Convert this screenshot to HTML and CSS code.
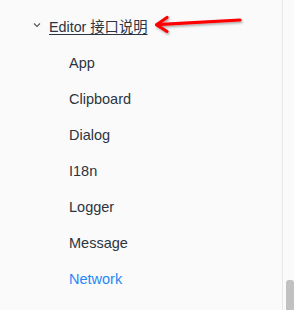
FILE: index.html
```html
<!DOCTYPE html>
<html>
<head>
<meta charset="utf-8">
<link rel="stylesheet" href="styles.css">
</head>
<body>
<div class="page">
  <nav class="sidebar">
    <div class="group">
      <div class="group-title">
        <svg class="chevron" width="8" height="6" viewBox="0 0 8 6"><path d="M1 1.5 L4 4.5 L7 1.5" fill="none" stroke="#555" stroke-width="1.1"/></svg>
        <a class="group-link">Editor 接口说明</a>
        <svg class="arrow" width="100" height="30" viewBox="0 0 100 30">
          <defs>
            <filter id="sh" x="-10%" y="-30%" width="120%" height="160%">
              <feDropShadow dx="1" dy="1.5" stdDeviation="1.2" flood-color="#000" flood-opacity="0.35"/>
            </filter>
          </defs>
          <g filter="url(#sh)" fill="none" stroke="#f00" stroke-width="3.2" stroke-linecap="round" stroke-linejoin="round">
            <path d="M90 12 L7 16.7"/>
            <path d="M17 9.5 L6.5 16.7 L17 23.5"/>
          </g>
        </svg>
      </div>
      <ul class="items">
        <li class="item">App</li>
        <li class="item">Clipboard</li>
        <li class="item">Dialog</li>
        <li class="item">I18n</li>
        <li class="item">Logger</li>
        <li class="item">Message</li>
        <li class="item active">Network</li>
      </ul>
    </div>
  </nav>
  <div class="scroll-track"><div class="scroll-thumb"></div></div>
</div>
</body>
</html>
```
FILE: styles.css
```css
html, body {
  margin: 0;
  padding: 0;
  background: #fafafa;
}
.page {
  display: flex;
  width: 294px;
  height: 310px;
  overflow: hidden;
  font-family: "Liberation Sans", Arial, "Noto Sans CJK SC", sans-serif;
  font-size: 14.5px;
  color: #2c3440;
}
.sidebar {
  width: 283px;
  border-right: 1px solid #e8e8e8;
  box-sizing: border-box;
  padding-top: 7px;
}
.group-title {
  position: relative;
  display: flex;
  align-items: center;
  height: 36px;
  padding-left: 33px;
}
.chevron {
  margin-right: 8px;
}
.group-link {
  font-size: 14.3px;
  text-decoration: underline;
  text-underline-offset: 2px;
  color: #2c3440;
}
.arrow {
  position: absolute;
  left: 150px;
  top: 1px;
}
.items {
  list-style: none;
  margin: 0;
  padding: 2px 0 0 69px;
}
.item {
  height: 36px;
  line-height: 36px;
}
.item.active {
  color: #1e88f5;
}
.scroll-track {
  flex: 1;
  display: flex;
  flex-direction: column;
  justify-content: flex-end;
  padding-left: 3px;
}
.scroll-thumb {
  height: 30px;
  background: #c1c1c1;
  border-radius: 3px 3px 0 0;
}
```
